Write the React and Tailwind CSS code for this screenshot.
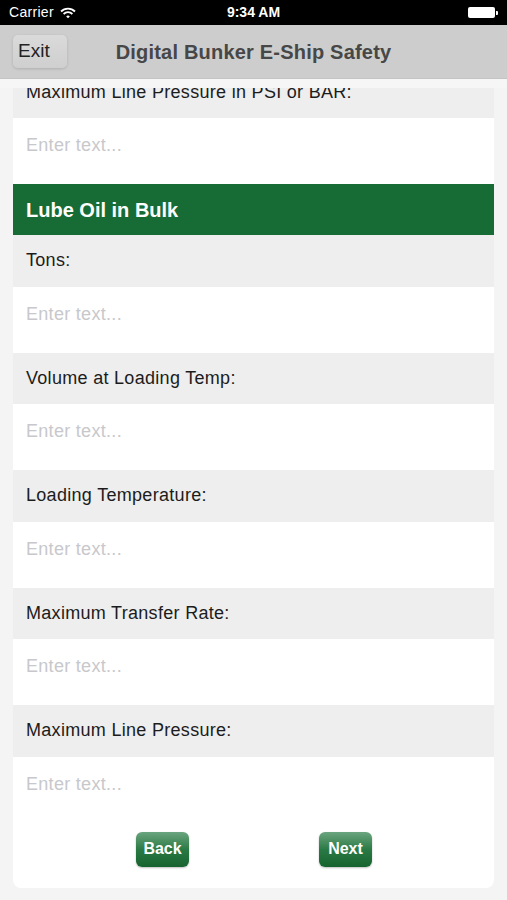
import { Fragment } from "react";

const fields = [
  "Tons:",
  "Volume at Loading Temp:",
  "Loading Temperature:",
  "Maximum Transfer Rate:",
  "Maximum Line Pressure:",
];

const font = { fontFamily: '"Liberation Sans", Arial, sans-serif' };

const LabelRow = ({ text }) => (
  <div className="h-[51.5px] flex items-center px-[13px] bg-[#eeeeee] text-[18px] tracking-[0.3px] text-[#1c1c1c]">
    {text}
  </div>
);

const InputRow = () => (
  <div className="h-[66px] bg-white px-[13px] pt-[16px]">
    <input
      type="text"
      placeholder="Enter text..."
      className="w-full h-[20px] text-[18px] tracking-[0.3px] leading-[20px] bg-transparent outline-none placeholder-[#c8c8cc]"
      style={font}
    />
  </div>
);

export default function App() {
  return (
    <div className="w-[507px] h-[900px] overflow-hidden bg-[#f4f4f4] flex flex-col" style={font}>
      {/* STATUS BAR */}
      <div className="h-[25px] bg-black text-white flex items-center px-[9px] relative shrink-0">
        <span className="text-[14px] tracking-[0.3px]">Carrier</span>
        <svg width="16" height="12" viewBox="0 0 16 12" className="ml-[6px]">
          <path d="M1 4.5a10 10 0 0 1 14 0" stroke="white" strokeWidth="1.8" fill="none" />
          <path d="M3.6 7a6.3 6.3 0 0 1 8.8 0" stroke="white" strokeWidth="1.8" fill="none" />
          <path d="M6.2 9.4a2.6 2.6 0 0 1 3.6 0L8 11.3z" fill="white" />
        </svg>
        <span className="absolute left-0 right-0 text-center text-[14px] font-semibold">9:34 AM</span>
        <div className="ml-auto flex items-center">
          <div className="w-[27px] h-[11px] bg-white rounded-[2px]" />
          <div className="w-[2px] h-[4px] bg-white rounded-r-[1px] ml-[1px]" />
        </div>
      </div>

      {/* NAV BAR */}
      <div className="h-[54px] bg-[#cdcdcd] flex items-center relative shrink-0 border-b border-[#c4c4c4]">
        <button className="ml-[13px] w-[54px] h-[33px] rounded-[5px] bg-gradient-to-b from-[#dadada] to-[#cfcfcf] shadow-[0_1px_3px_rgba(0,0,0,0.15)] text-[19px] text-[#222] text-left pl-[5px] relative z-10">
          Exit
        </button>
        <div className="absolute left-0 right-0 text-center text-[20px] tracking-[0.2px] text-[#474747] font-semibold">
          Digital Bunker E-Ship Safety
        </div>
      </div>

      {/* CONTENT */}
      <div className="flex-1 pt-[9px] bg-[#f6f6f6] flex flex-col">
        <div className="flex-1 overflow-hidden px-[13px] pb-[13px] bg-[#f4f4f4]">
          <div className="-mt-[21.5px] bg-white rounded-[8px] overflow-hidden">
            <LabelRow text="Maximum Line Pressure in PSI or BAR:" />
            <InputRow />

            <div className="h-[51px] bg-[#176b35] flex items-center px-[13px] text-white text-[20px] font-semibold">
              Lube Oil in Bulk
            </div>

            {fields.map((f) => (
              <Fragment key={f}>
                <LabelRow text={f} />
                <InputRow />
              </Fragment>
            ))}

            {/* BUTTONS */}
            <div className="flex pt-[9px] pb-[21px] pl-[123px] gap-[130px]">
              <button className="w-[53px] h-[35px] rounded-[6px] bg-gradient-to-b from-[#6aa57f] via-[#2a7a45] to-[#17632f] text-white text-[16px] font-bold shadow-[0_1px_2px_rgba(0,0,0,0.25)]">
                Back
              </button>
              <button className="w-[53px] h-[35px] rounded-[6px] bg-gradient-to-b from-[#6aa57f] via-[#2a7a45] to-[#17632f] text-white text-[16px] font-bold shadow-[0_1px_2px_rgba(0,0,0,0.25)]">
                Next
              </button>
            </div>
          </div>
        </div>
      </div>
    </div>
  );
}
